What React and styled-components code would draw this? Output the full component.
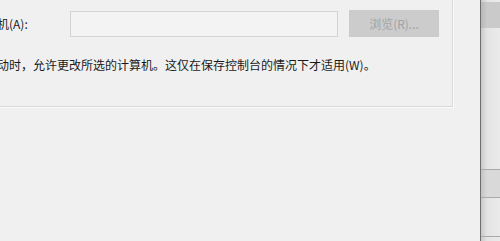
import React from "react";
import styled, { createGlobalStyle } from "styled-components";

const GlobalStyle = createGlobalStyle`
  html, body {
    margin: 0;
    padding: 0;
    background: #f0f0f0;
  }
  body {
    font-family: "Noto Sans CJK SC", "Liberation Sans", sans-serif;
  }
`;

const Screen = styled.div`
  width: 500px;
  height: 241px;
  display: flex;
  overflow: hidden;
  background: #f0f0f0;
`;

const Dialog = styled.div`
  width: 480px;
  flex: none;
  overflow: hidden;
`;

const GroupBox = styled.div`
  width: 465px;
  height: 107px;
  margin-left: -12px;
  border-right: 1px solid #d9d9d9;
  border-bottom: 1px solid #d9d9d9;
  box-shadow: 1px 1px 0 #fbfbfb;
  padding-left: 9px;
  box-sizing: border-box;
  display: flex;
  flex-direction: column;
`;

const FieldRow = styled.div`
  display: flex;
  align-items: center;
  height: 27px;
  margin-top: 10px;
`;

const Label = styled.span`
  width: 73px;
  flex: none;
  font-size: 12px;
  color: #1a1a1a;
  white-space: nowrap;
`;

const TextInput = styled.div`
  width: 266px;
  height: 24px;
  flex: none;
  border: 1px solid #d3d3d3;
  background: #f3f3f3;
`;

const Button = styled.div`
  width: 90px;
  height: 27px;
  margin-left: 11px;
  flex: none;
  background: #cccccc;
  color: #a3a3a3;
  font-size: 12px;
  display: flex;
  align-items: center;
  justify-content: center;
`;

const Note = styled.div`
  margin-top: 20px;
  font-size: 12px;
  line-height: 16px;
  color: #1a1a1a;
  white-space: nowrap;
`;

const SideWindow = styled.div`
  flex: 1;
  border-left: 1px solid #6e6e6e;
  background: linear-gradient(to right, #c9c9c9, #e4e4e4 6px, #eaeaea);
  display: flex;
  flex-direction: column;
`;

const Band = styled.div`
  height: ${(p) => p.h}px;
  flex: none;
  background: ${(p) => p.bg || "transparent"};
  border-bottom: ${(p) => (p.line ? "1px solid #a9a9a9" : "none")};
`;

export default function App() {
  return (
    <>
      <GlobalStyle />
      <Screen>
        <Dialog>
          <GroupBox>
            <FieldRow>
              <Label>机(A):</Label>
              <TextInput />
              <Button>浏览(R)...</Button>
            </FieldRow>
            <Note>
              动时，允许更改所选的计算机。这仅在保存控制台的情况下才适用(W)。
            </Note>
          </GroupBox>
        </Dialog>
        <SideWindow>
          <Band h={2} />
          <Band h={26} bg="linear-gradient(to right, #b8b8b8, #cacaca 6px)" />
          <Band h={141} line />
          <Band h={27} bg="linear-gradient(to right, #c4c4c4, #d9d9d9 6px)" line />
          <Band h={38} line />
        </SideWindow>
      </Screen>
    </>
  );
}
